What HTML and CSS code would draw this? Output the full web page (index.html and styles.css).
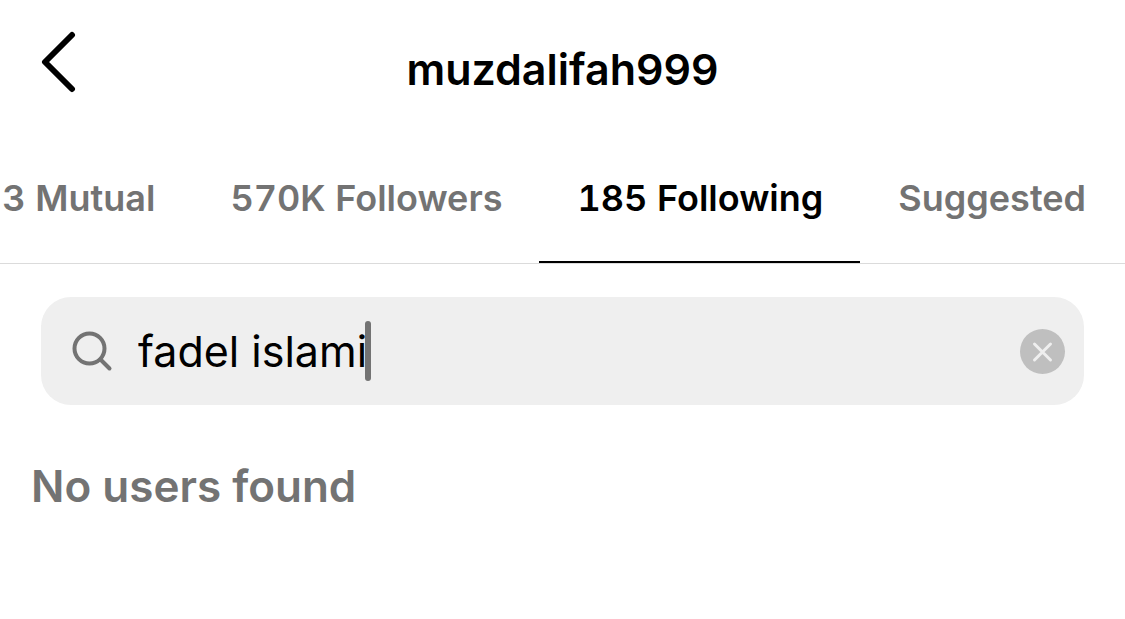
FILE: index.html
```html
<!DOCTYPE html>
<html lang="en">
<head>
<meta charset="utf-8">
<meta name="viewport" content="width=device-width, initial-scale=1">
<title>muzdalifah999</title>
<link rel="stylesheet" href="styles.css">
</head>
<body>
<header class="header">
  <button class="back" type="button" aria-label="Back">
    <svg class="back-icon" viewBox="0 0 36 62" aria-hidden="true"><path d="M32 4 5 31 32 58"/></svg>
  </button>
  <h1 class="username">muzdalifah999</h1>
</header>
<nav class="tabs" aria-label="Connections">
  <a class="tab" href="#mutual">3 Mutual</a>
  <a class="tab" href="#followers">570K Followers</a>
  <a class="tab tab-active" href="#following" aria-current="page">185 Following</a>
  <a class="tab" href="#suggested">Suggested</a>
</nav>
<main class="content">
  <form class="search" role="search">
    <svg class="search-icon" viewBox="0 0 42 42" aria-hidden="true"><circle cx="18.500" cy="18.500" r="15"/><path d="M29.500 29.500 38.500 38.500"/></svg>
    <span class="entry">
      <input class="search-input" type="text" aria-label="Search" value="fadel islami">
      <span class="caret"></span>
    </span>
    <button class="clear" type="reset" aria-label="Clear search">
      <svg class="clear-icon" viewBox="0 0 46 46" aria-hidden="true"><circle cx="22.500" cy="23.500" r="22.500"/><path d="m14.500 16 16 16M30.500 16l-16 16"/></svg>
    </button>
  </form>
  <p class="empty">No users found</p>
</main>
</body>
</html>
```
FILE: styles.css
```css
* { box-sizing: border-box; }
body {
  margin: 0;
  background: #fff;
  color: #000;
  font-family: Inter, "Liberation Sans", sans-serif;
}
button { padding: 0; border: 0; background: none; }
svg { display: block; fill: none; }
.header {
  display: grid;
  grid-template-columns: 80px 1fr 80px;
  align-items: center;
  height: 138px;
}
.back { justify-self: end; padding: 0 4px 14px 0; }
.back-icon { width: 36px; height: 62px; stroke: #000; stroke-width: 6; stroke-linecap: round; stroke-linejoin: round; }
.username {
  margin: 0;
  text-align: center;
  font-size: 43px;
  line-height: 48px;
  font-weight: 600;
}
.tabs {
  display: flex;
  justify-content: flex-end;
  height: 126px;
  padding-right: 2px;
  border-bottom: 1px solid #dbdbdb;
  overflow: hidden;
}
.tab {
  flex: none;
  padding: 0 37px 0 38px;
  color: #737373;
  font-size: 36px;
  font-variant-numeric: tabular-nums;
  line-height: 120px;
  font-weight: 600;
  text-decoration: none;
  white-space: nowrap;
}
.tab-active { color: #000; border-bottom: 2px solid #000; }
.content { padding: 33px 41px 0; }
.search {
  display: flex;
  align-items: center;
  height: 108px;
  padding: 0 18px 0 30px;
  border-radius: 30px;
  background: #efefef;
}
.search-icon { flex: none; width: 42px; height: 42px; margin-right: 25px; stroke: #737373; stroke-width: 4; stroke-linecap: round; }
.entry { position: relative; flex: 1; display: flex; min-width: 0; }
.search-input {
  width: 100%;
  height: 60px;
  padding: 0;
  border: 0;
  outline: 0;
  background: transparent;
  color: #000;
  font: 400 43px Inter, "Liberation Sans", sans-serif;
}
.caret {
  position: absolute;
  top: 0;
  left: 227px;
  width: 6px;
  height: 60px;
  border-radius: 3px;
  background: #737373;
}
.clear-icon { width: 46px; height: 46px; }
.clear-icon circle { fill: #bfbfbf; }
.clear-icon path { stroke: #efefef; stroke-width: 3; stroke-linecap: round; }
.empty {
  margin: 53px 0 0 -10px;
  color: #737373;
  font-size: 44px;
  line-height: 56px;
  font-weight: 600;
}
```
